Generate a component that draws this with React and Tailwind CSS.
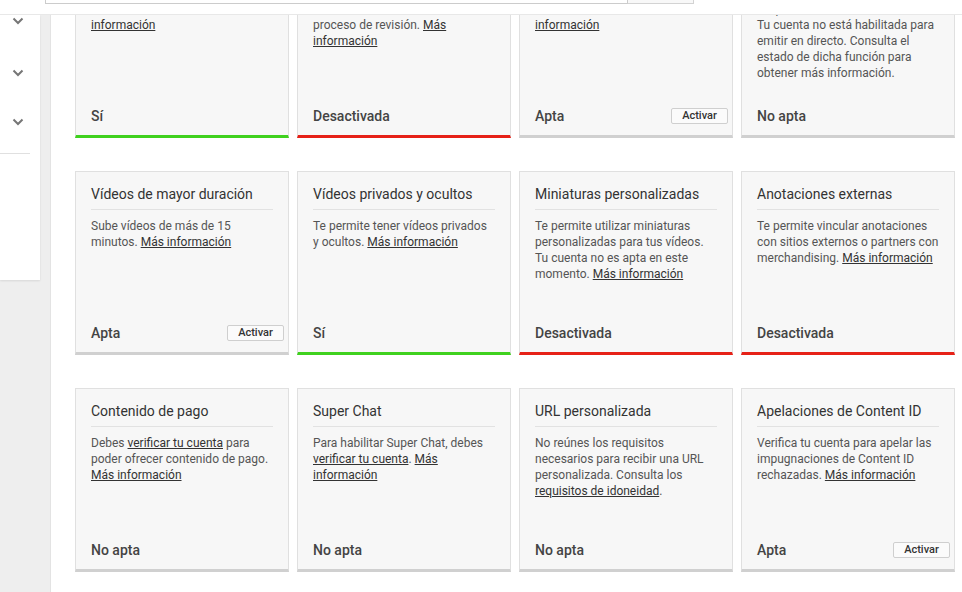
import React from "react";

const L = (t) => ({ t, l: true });

const rows = [
  [
    { title: "Monetización", lines: [["Puedes monetizar tus vídeos. ", L("Más")], [L("información")]], status: "Sí", bar: "green" },
    { title: "Asociación", lines: [["Tu cuenta se encuentra en el"], ["proceso de revisión. ", L("Más")], [L("información")]], status: "Desactivada", bar: "red" },
    { title: "Emisiones externas", lines: [["Emite desde tu canal. ", L("Más")], [L("información")]], status: "Apta", bar: "gray", button: true },
    { title: "Emisiones en directo", lines: [["No puedes emitir en directo."], ["Tu cuenta no está habilitada para"], ["emitir en directo. Consulta el"], ["estado de dicha función para"], ["obtener más información."]], status: "No apta", bar: "gray" },
  ],
  [
    { title: "Vídeos de mayor duración", lines: [["Sube vídeos de más de 15"], ["minutos. ", L("Más información")]], status: "Apta", bar: "gray", button: true },
    { title: "Vídeos privados y ocultos", lines: [["Te permite tener vídeos privados"], ["y ocultos. ", L("Más información")]], status: "Sí", bar: "green" },
    { title: "Miniaturas personalizadas", lines: [["Te permite utilizar miniaturas"], ["personalizadas para tus vídeos."], ["Tu cuenta no es apta en este"], ["momento. ", L("Más información")]], status: "Desactivada", bar: "red" },
    { title: "Anotaciones externas", lines: [["Te permite vincular anotaciones"], ["con sitios externos o partners con"], ["merchandising. ", L("Más información")]], status: "Desactivada", bar: "red" },
  ],
  [
    { title: "Contenido de pago", lines: [["Debes ", L("verificar tu cuenta"), " para"], ["poder ofrecer contenido de pago."], [L("Más información")]], status: "No apta", bar: "gray" },
    { title: "Super Chat", lines: [["Para habilitar Super Chat, debes"], [L("verificar tu cuenta"), ". ", L("Más")], [L("información")]], status: "No apta", bar: "gray" },
    { title: "URL personalizada", lines: [["No reúnes los requisitos"], ["necesarios para recibir una URL"], ["personalizada. Consulta los"], [L("requisitos de idoneidad"), "."]], status: "No apta", bar: "gray" },
    { title: "Apelaciones de Content ID", lines: [["Verifica tu cuenta para apelar las"], ["impugnaciones de Content ID"], ["rechazadas. ", L("Más información")]], status: "Apta", bar: "gray", button: true },
  ],
];

const barClass = {
  green: "border-b-[#3fd11e]",
  red: "border-b-[#e62117]",
  gray: "border-b-[#d0d0d0]",
};

function Chevron() {
  return (
    <svg width="12" height="8" viewBox="0 0 12 8" className="block">
      <path d="M1.5 1.5 L6 6 L10.5 1.5" fill="none" stroke="#767676" strokeWidth="2" />
    </svg>
  );
}

function Card({ c }) {
  return (
    <div className={`h-[184px] bg-[#f7f7f7] border border-[#e0e0e0] border-b-[3px] ${barClass[c.bar]} flex flex-col`}>
      <div className="mx-[15px] pt-[13px] pb-[6px] border-b border-[#e2e2e2] text-[14px] leading-[18px] text-[#333] whitespace-nowrap">
        {c.title}
      </div>
      <div className="mx-[15px] mt-[8px] text-[12px] leading-[16px] text-[#555]">
        {c.lines.map((ln, i) => (
          <div key={i} className="whitespace-nowrap">
            {ln.map((s, j) =>
              typeof s === "string" ? (
                <span key={j}>{s}</span>
              ) : (
                <span key={j} className="underline text-[#333]">{s.t}</span>
              )
            )}
          </div>
        ))}
      </div>
      <div className="mt-auto pl-[15px] pr-[4px] pb-[10px] flex items-center justify-between h-[28px]">
        <span className="text-[14px] leading-[18px] font-medium text-[#444]">{c.status}</span>
        {c.button && (
          <span className="h-[16px] w-[57px] flex items-center justify-center bg-[#fbfbfb] border border-[#cfcfcf] rounded-[2px] text-[11px] leading-[14px] font-medium text-[#333]">
            Activar
          </span>
        )}
      </div>
    </div>
  );
}

export default function App() {
  return (
    <div className="w-[962px] h-[592px] overflow-hidden bg-[#eeeeee] flex flex-col" style={{ fontFamily: "Roboto, 'Noto Sans', Arial, sans-serif" }}>
      <div className="h-[15px] shrink-0 bg-white border-b border-[#e8e8e8] relative z-10">
        <div className="flex ml-[45px] mt-[-20px] h-[24px]">
          <div className="w-[583px] h-full bg-white border border-[#cccccc]" />
          <div className="w-[66px] h-full bg-[#f8f8f8] border border-l-0 border-[#d3d3d3]" />
        </div>
      </div>
      <div className="flex flex-1 min-h-0">
        <div className="w-[40px] h-[265px] bg-white shadow-[0_1px_2px_rgba(0,0,0,0.1)] shrink-0 flex flex-col">
          <div className="pl-[12px] pt-[2px]"><Chevron /></div>
          <div className="pl-[12px] pt-[44px]"><Chevron /></div>
          <div className="pl-[12px] pt-[41px]"><Chevron /></div>
          <div className="mt-[27px] w-[30px] border-b border-[#e0e0e0]" />
        </div>
        <div className="w-[10px] shrink-0" />
        <div className="flex-1 bg-white border-l border-[#e3e3e3] overflow-hidden">
          <div className="pl-[24px] mt-[-61px] flex flex-col gap-[33px]">
            {rows.map((r, i) => (
              <div key={i} className="grid grid-cols-[214px_214px_214px_214px] gap-x-[8px]">
                {r.map((c, j) => (
                  <Card key={j} c={c} />
                ))}
              </div>
            ))}
          </div>
        </div>
      </div>
    </div>
  );
}
